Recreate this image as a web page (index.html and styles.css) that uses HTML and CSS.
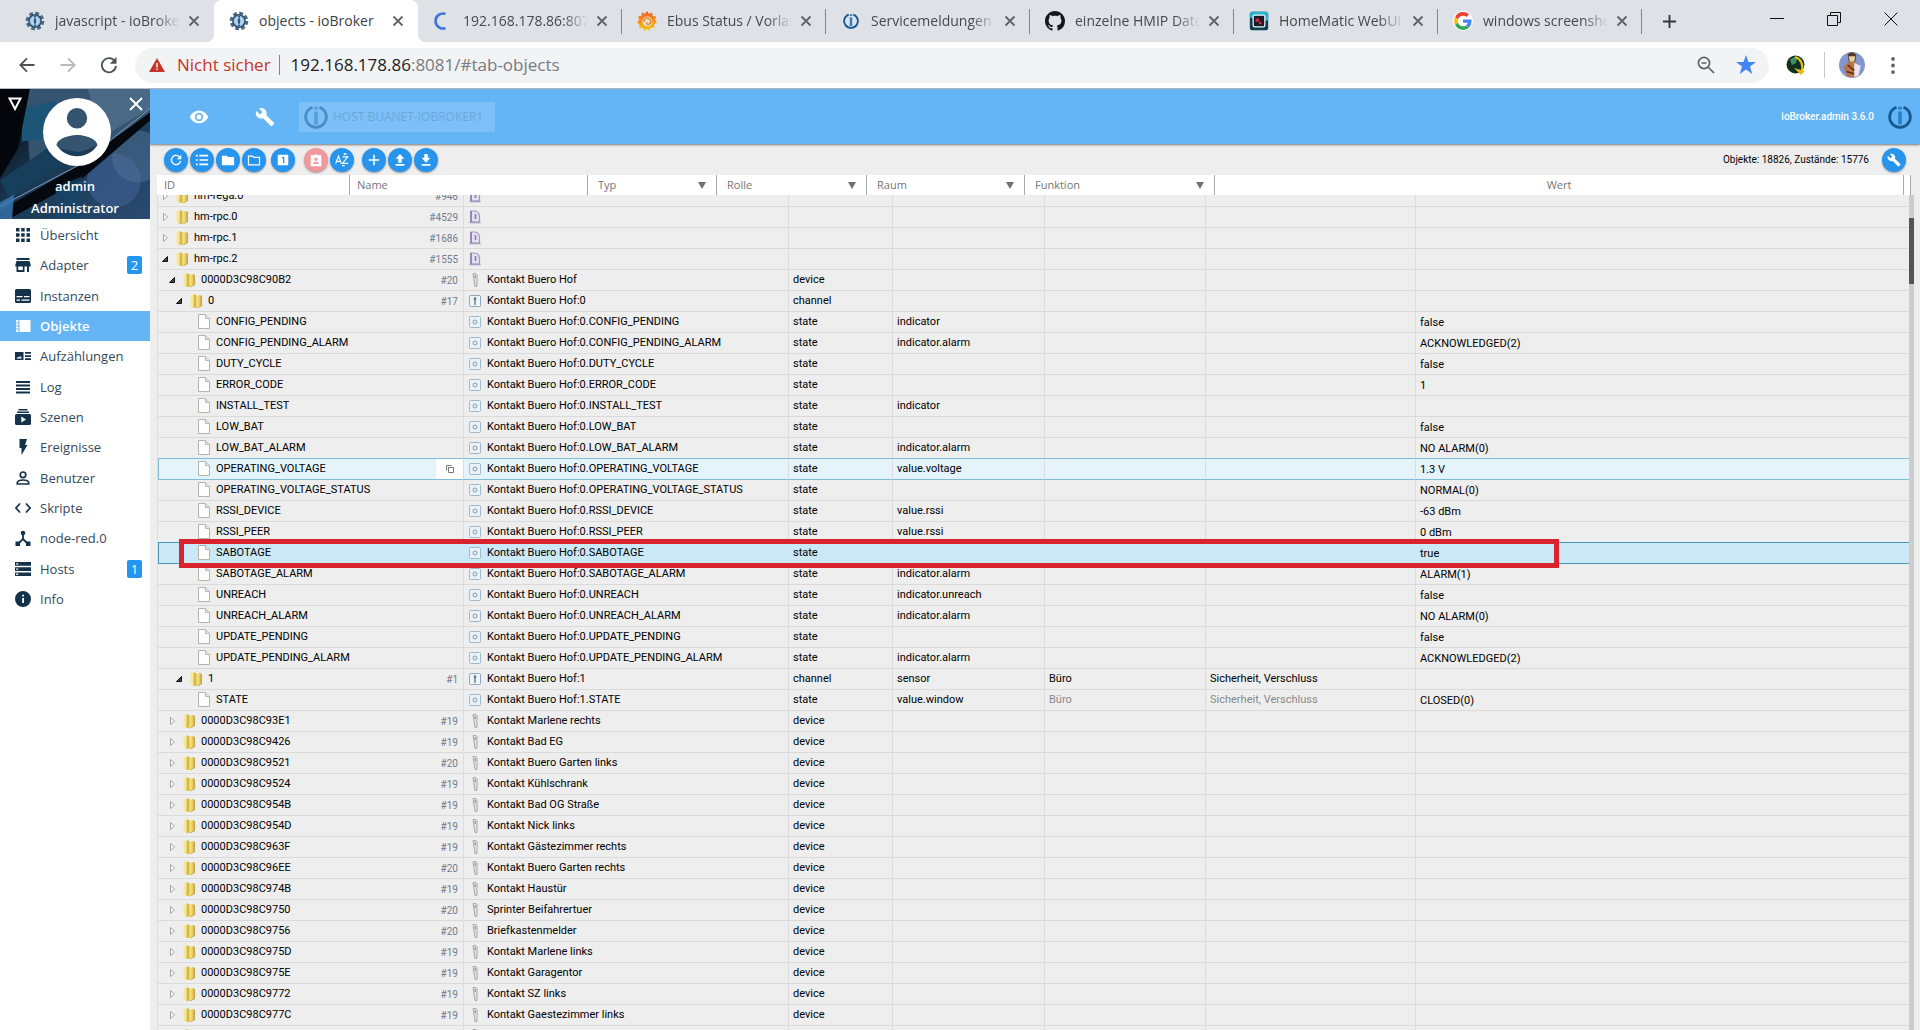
FILE: index.html
```
<!DOCTYPE html>
<html lang="de">
<head>
<meta charset="utf-8">
<title>objects - ioBroker</title>
<link rel="stylesheet" href="styles.css">
</head>
<body>
<svg class="sprite" aria-hidden="true">
  <defs>
    <linearGradient id="gold" x1="0" x2="1" y1="0" y2="0"><stop offset="0" stop-color="#f6e793"/><stop offset=".5" stop-color="#ecd268"/><stop offset="1" stop-color="#c9a63a"/></linearGradient>
    <linearGradient id="flame" x1="0" x2="0" y1="0" y2="1"><stop offset="0" stop-color="#ef5b28"/><stop offset="1" stop-color="#fbca0a"/></linearGradient>
  </defs>
  <symbol id="x" viewBox="0 0 12 12"><path d="M1.500 1.500l9 9M10.500 1.500l-9 9" fill="none" stroke="currentColor" stroke-width="1.800"/></symbol>
  <symbol id="gear" viewBox="0 0 24 24"><circle cx="12" cy="12" r="9.500" fill="none" stroke="#4d6b86" stroke-width="3.400" stroke-dasharray="4.600 2.860"/><circle cx="12" cy="12" r="7.400" fill="#9fc3e2" stroke="#294b6c" stroke-width="1.800"/><path d="M12 6v12" stroke="#1d4f80" stroke-width="2.200"/><circle cx="12" cy="12" r="4" fill="none" stroke="#e3eff8" stroke-width=".8"/></symbol>
  <symbol id="io" viewBox="0 0 24 24"><path d="M8.500 2.300a10.300 10.300 0 1 0 7 0" fill="none" stroke="#17598f" stroke-width="2.800"/><path d="M12 6.500v13M12 1.800v2.800" stroke="#2c7fc0" stroke-width="3.600"/></symbol>
  <symbol id="folder" viewBox="0 0 16 16"><path d="M2.500 2.500L6 .8l2 1.400v12.600L5.500 15 2.500 13.400z" fill="#f6e898"/><path d="M5.800 1.200l3 1.400v12l-3.300.4z" fill="#d6b846"/><path d="M8.500 3.600L12 1.800l1.700 1.300v9.700L8.600 15z" fill="url(#gold)"/><path d="M13.400 3v10l-4.500 2" fill="none" stroke="#b99733" stroke-width=".7"/></symbol>
  <symbol id="file" viewBox="0 0 16 16"><path d="M2.500.5h7l4 4v10h-11z" fill="#fdfdfb" stroke="#b4b4ae"/><path d="M9.500.5v4h4" fill="#e4e4de" stroke="#b8b8b2"/></symbol>
  <symbol id="closed" viewBox="0 0 12 12"><path d="M4.500 2.500v7l4-3.500z" fill="#fff" stroke="#9a9a9a" stroke-width=".9"/></symbol>
  <symbol id="open" viewBox="0 0 12 12"><path d="M8.500 3.500v5h-5z" fill="#444" stroke="#111"/></symbol>
  <symbol id="inst" viewBox="0 0 16 16"><path d="M4 13V2h4q4 .5 4.500 5v6z" fill="#e6e1f0" stroke="#a399bd" stroke-width="1.200"/><path d="M4 2v11M8.500 5v5" stroke="#8b7eae" stroke-width="1.600"/><path d="M2.500 13.500h11" stroke="#a79cc2" stroke-width="1.600"/></symbol>
  <symbol id="dev" viewBox="0 0 16 16"><path d="M6 1.500h3l1 1v12H8z" fill="#e2e2e2" stroke="#a8a8a8"/><path d="M8.200 3v3" stroke="#888"/></symbol>
  <symbol id="chan" viewBox="0 0 16 16"><rect x="2.500" y="2.500" width="11" height="11" rx="1" fill="#eef5f9" stroke="#8fa9ba"/><path d="M8 4v8M6.500 6h3" stroke="#476478" stroke-width="1.200"/></symbol>
  <symbol id="state" viewBox="0 0 16 16"><rect x="2.500" y="2.500" width="11" height="11" rx="1" fill="#eaf2f7" stroke="#a2b9c8"/><circle cx="8" cy="8" r="2" fill="none" stroke="#7f9db0"/></symbol>
  <symbol id="wrench" viewBox="0 0 24 24"><path fill="currentColor" d="M22.700 19l-9.100-9.100c.9-2.300.4-5-1.500-6.900-2-2-5-2.400-7.400-1.300L9 6 6 9 1.600 4.700C.4 7.100.9 10.100 2.900 12.100c1.900 1.900 4.600 2.400 6.900 1.500l9.100 9.100c.4.4 1 .4 1.400 0l2.300-2.300c.5-.4.5-1.100.1-1.400z"/></symbol>
</svg>

<header class="browser">
  <div class="tabs">
    <div class="tab"><svg class="fav"><use href="#gear"/></svg><span class="tt">javascript - ioBroker</span><button class="tc" aria-label="Tab schließen"><svg><use href="#x"/></svg></button></div>
    <div class="tab active"><svg class="fav"><use href="#gear"/></svg><span class="tt">objects - ioBroker</span><button class="tc" aria-label="Tab schließen"><svg><use href="#x"/></svg></button></div>
    <div class="tab sep"><svg class="fav" viewBox="0 0 24 24"><path d="M15 3.500a9 9 0 1 0 0 17" fill="none" stroke="#3b73dc" stroke-width="3"/></svg><span class="tt">192.168.178.86:8077</span><button class="tc" aria-label="Tab schließen"><svg><use href="#x"/></svg></button></div>
    <div class="tab sep"><svg class="fav" viewBox="0 0 24 24"><path d="M12 0l2.300 3.200 3.900-1.400.5 4.200 4.300.7-1.400 3.900 2.400 3.200-3.500 2.200.3 4-4-.2-2.100 3.600L12 21.500 8.600 24 7 20.200l-4.300.2.400-4L0 13.800l2.600-3.200-1.300-3.900 4.100-.7.500-4.200 3.900 1.400z" fill="url(#flame)"/><circle cx="12.500" cy="12.500" r="6" fill="#dee1e6"/><path d="M8.500 13a4 4 0 1 1 6 2.800c-2 1-3.500-.8-2.700-2.300" fill="none" stroke="#f38a1e" stroke-width="1.800"/></svg><span class="tt">Ebus Status / Vorlauf</span><button class="tc" aria-label="Tab schließen"><svg><use href="#x"/></svg></button></div>
    <div class="tab sep"><svg class="fav small"><use href="#io"/></svg><span class="tt">Servicemeldungen - io</span><button class="tc" aria-label="Tab schließen"><svg><use href="#x"/></svg></button></div>
    <div class="tab sep"><svg class="fav" viewBox="0 0 16 16"><path fill="#15171a" d="M8 0C3.580 0 0 3.580 0 8c0 3.540 2.290 6.530 5.470 7.590.4.070.55-.17.55-.38 0-.19-.01-.82-.01-1.490-2.010.37-2.530-.49-2.690-.94-.09-.23-.48-.94-.82-1.130-.28-.15-.68-.52-.01-.53.63-.01 1.080.58 1.230.82.72 1.210 1.870.87 2.330.66.070-.52.28-.87.51-1.070-1.780-.2-3.640-.89-3.640-3.950 0-.87.31-1.590.82-2.150-.08-.2-.36-1.020.08-2.120 0 0 .67-.21 2.200.82.64-.18 1.320-.27 2-.27s1.360.09 2 .27c1.530-1.040 2.200-.82 2.200-.82.44 1.100.16 1.920.08 2.120.51.56.82 1.270.82 2.150 0 3.070-1.870 3.750-3.650 3.950.29.25.54.73.54 1.480 0 1.070-.01 1.930-.01 2.200 0 .21.15.46.55.38A8.010 8.010 0 0 0 16 8c0-4.420-3.580-8-8-8z"/></svg><span class="tt">einzelne HMIP Datenpunkte</span><button class="tc" aria-label="Tab schließen"><svg><use href="#x"/></svg></button></div>
    <div class="tab sep"><svg class="fav" viewBox="0 0 24 24"><rect x="1" y="1" width="22" height="22" rx="3" fill="#0c3c4f"/><path d="M1 8V4a3 3 0 0 1 3-3h16a3 3 0 0 1 3 3v8z" fill="#27b3cf"/><rect x="5" y="5" width="14" height="14" rx="2" fill="#1b1a22" stroke="#eef6f8" stroke-width="1.500"/><path d="M8 9h4v4H8zM12 13h3v3h-3z" fill="#d02b50"/></svg><span class="tt">HomeMatic WebUI</span><button class="tc" aria-label="Tab schließen"><svg><use href="#x"/></svg></button></div>
    <div class="tab sep"><svg class="fav" viewBox="-3 -3 54 54"><circle cx="24" cy="24" r="27" fill="#fff"/><path fill="#ea4335" d="M24 9.500c3.540 0 6.710 1.220 9.210 3.600l6.850-6.850C35.900 2.380 30.470 0 24 0 14.620 0 6.510 5.380 2.560 13.220l7.980 6.190C12.430 13.720 17.740 9.500 24 9.500z"/><path fill="#4285f4" d="M46.980 24.550c0-1.570-.15-3.090-.38-4.550H24v9.020h12.940c-.58 2.960-2.260 5.480-4.780 7.180l7.730 6c4.510-4.180 7.090-10.360 7.090-17.650z"/><path fill="#fbbc05" d="M10.530 28.590c-.48-1.450-.76-2.990-.76-4.590s.27-3.140.76-4.590l-7.980-6.190C.92 16.460 0 20.120 0 24s.92 7.540 2.560 10.780z"/><path fill="#34a853" d="M24 48c6.480 0 11.930-2.130 15.890-5.810l-7.730-6c-2.150 1.450-4.920 2.300-8.160 2.300-6.260 0-11.570-4.220-13.470-9.910l-7.980 6.190C6.510 42.620 14.620 48 24 48z"/></svg><span class="tt">windows screenshot</span><button class="tc" aria-label="Tab schließen"><svg><use href="#x"/></svg></button></div>
    <button class="newtab" aria-label="Neuer Tab"><svg viewBox="0 0 16 16"><path d="M8 1v14M1 8h14" stroke="#33363a" stroke-width="2"/></svg></button>
    <div class="win">
      <button aria-label="Minimieren"><svg viewBox="0 0 14 14"><path d="M0 6.500h14" stroke="#111"/></svg></button>
      <button aria-label="Verkleinern"><svg viewBox="0 0 14 14"><path d="M.5 3.500h10v10H.500zM3.500 3.500v-3h10v10h-3" fill="none" stroke="#111"/></svg></button>
      <button aria-label="Schließen"><svg viewBox="0 0 14 14"><path d="M.5.5l13 13M13.500.5l-13 13" stroke="#111"/></svg></button>
    </div>
  </div>
  <div class="nav">
    <button class="nb" aria-label="Zurück"><svg viewBox="0 0 24 24"><path d="M21 12H4M12 4l-8 8 8 8" fill="none" stroke="#4d5156" stroke-width="2.200"/></svg></button>
    <button class="nb" aria-label="Vorwärts"><svg viewBox="0 0 24 24"><path d="M3 12h17M12 4l8 8-8 8" fill="none" stroke="#b8babd" stroke-width="2.200"/></svg></button>
    <button class="nb" aria-label="Neu laden"><svg viewBox="0 0 24 24"><path d="M19 7.500A8.500 8.500 0 1 0 20.400 13" fill="none" stroke="#4d5156" stroke-width="2.200"/><path d="M21 2.500v8h-8z" fill="#4d5156"/></svg></button>
    <div class="omni">
      <svg class="warn" viewBox="0 0 16 14"><path d="M8 0l8 14H0z" fill="#c5352b"/><path d="M8 5v4.500M8 10.500v1.600" stroke="#fff" stroke-width="1.400"/></svg>
      <span class="unsafe">Nicht sicher</span>
      <span class="url"><b>192.168.178.86</b>:8081/#tab-objects</span>
      <button class="ob" aria-label="Zoom"><svg viewBox="0 0 18 18"><circle cx="7" cy="7" r="5.600" fill="none" stroke="#5f6368" stroke-width="1.700"/><path d="M4.500 7h5M11 11l6 6" stroke="#5f6368" stroke-width="1.700"/></svg></button>
      <button class="ob" aria-label="Lesezeichen"><svg viewBox="0 0 20 20"><path d="M10 0l2.500 7H20l-6 4.500 2.300 7.500L10 14.500 3.700 19 6 11.500 0 7h7.500z" fill="#4285f4"/></svg></button>
    </div>
    <div class="ext">
      <svg class="globe" viewBox="0 0 20 20"><circle cx="9.500" cy="9.500" r="9" fill="#12301c"/><path d="M4 5q3-4 7-2l-1 5-4 2z" fill="#3f8f66"/><path d="M9 2q9 3 7 15" fill="none" stroke="#e2c21f" stroke-width="2.200"/><path d="M8 13l11 3-4 4z" fill="#e8b81a"/></svg>
      <svg class="avatar" viewBox="0 0 24 24"><circle cx="12" cy="12" r="12" fill="#8097cf"/><path d="M8 2q5-4 8 1l-1 6H9z" fill="#5b3a22"/><path d="M9 4h6l-1 5h-4z" fill="#e6d3a2"/><path d="M4 14l5-5h6l4 5-3 9H8z" fill="#b67545"/><path d="M14 10l6 3-2 9-4 1z" fill="#eee3ea"/><path d="M8 12l6 5M7 18l7 2" stroke="#5a2d1b" stroke-width="1.500"/></svg>
      <button class="menu" aria-label="Menü"><svg viewBox="0 0 4 18"><circle cx="2" cy="2" r="2"/><circle cx="2" cy="9" r="2"/><circle cx="2" cy="16" r="2"/></svg></button>
    </div>
  </div>
</header>

<div class="app">
  <aside class="side">
    <div class="user">
      <svg class="photo" viewBox="0 0 150 131" preserveAspectRatio="xMidYMid slice" aria-hidden="true">
        <defs><linearGradient id="ph" x1="0" y1="0" x2="1" y2="1"><stop offset="0" stop-color="#05080e"/><stop offset=".5" stop-color="#1b3a55"/><stop offset="1" stop-color="#2c4b72"/></linearGradient></defs>
        <rect width="150" height="131" fill="url(#ph)"/>
        <path d="M25 0h125v30L90 60 30 80z" fill="#35546f"/>
        <path d="M88 0h62v20l-50 30z" fill="#5d7da0" opacity=".5"/>
        <path d="M22 20l34-8 6 36-40 5z" fill="#1d5577"/>
        <path d="M0 0h30L18 60 0 90z" fill="#03060b"/>
        <path d="M0 92l50-34 30 6-70 46z" fill="#173f5b"/>
        <circle cx="114" cy="92" r="27" fill="#3a5a8a" opacity=".8"/>
        <circle cx="138" cy="68" r="26" fill="#4f7397" opacity=".5"/>
        <path d="M0 122L70 82 150 24v8L80 92 8 131H0z" fill="#05080f"/>
        <path d="M0 118L80 76 150 20" fill="none" stroke="#7f9bb8" stroke-width="1"/>
        <path d="M56 98l26-10v43H54z" fill="#16466a" opacity=".7"/>
        <path d="M0 114l14-8-2 25H0z" fill="#3a7cb8" opacity=".8"/>
      </svg>
      <button class="ucorner" aria-label="Menü"><svg viewBox="0 0 14 14"><path d="M1.500 1.500h11L7 12z" fill="none" stroke="#fff" stroke-width="2"/></svg></button>
      <button class="ucorner uclose" aria-label="Schließen"><svg viewBox="0 0 14 14"><path d="M1 1l12 12M13 1L1 13" stroke="#fff" stroke-width="1.800"/></svg></button>
      <svg class="face" viewBox="0 0 68 68"><path fill="#fff" fill-rule="evenodd" d="M34 0a34 34 0 1 0 0 68 34 34 0 0 0 0-68zm0 10a10.200 10.200 0 1 1 0 20.400A10.200 10.200 0 0 1 34 10zm0 48.300c-8.500 0-16-4.400-20.400-11C13.700 40.500 27.200 37 34 37s20.300 3.500 20.400 10.300c-4.400 6.600-11.900 11-20.400 11z"/></svg>
      <span>admin</span>
      <span>Administrator</span>
    </div>
    <nav class="menu-list">
      <a href="#tab-intro"><svg viewBox="0 0 16 16"><path d="M1 1h3.500v3.500H1zM6.200 1h3.500v3.500H6.200zM11.500 1H15v3.500h-3.500zM1 6.200h3.500v3.500H1zM6.200 6.200h3.500v3.500H6.200zM11.500 6.200H15v3.500h-3.500zM1 11.500h3.500V15H1zM6.200 11.500h3.500V15H6.200zM11.500 11.500H15V15h-3.500z"/></svg>Übersicht</a>
      <a href="#tab-adapters"><svg viewBox="0 0 16 16"><path fill-rule="evenodd" d="M1.500 1h13v2h-13zM1.500 4h13l1.200 4v1.500H14V15h-2V9.500H9.500V15H1.500V9.500H.3V8zM3.200 9.500V13h4.600V9.500z"/></svg>Adapter<i>2</i></a>
      <a href="#tab-instances"><svg viewBox="0 0 16 16"><path fill-rule="evenodd" d="M1.500 1h13a1.500 1.500 0 0 1 1.500 1.500v11a1.500 1.500 0 0 1-1.500 1.500h-13A1.500 1.500 0 0 1 0 13.500v-11A1.500 1.500 0 0 1 1.500 1zM1.500 8v1.300h6V8zM9 8v1.300h5.500V8zM1.500 11.500v1.300h3.500v-1.300zM6.500 11.500v1.300h8v-1.300z"/></svg>Instanzen</a>
      <a href="#tab-objects" class="on"><svg viewBox="0 0 16 16"><path d="M1 2h2.500v2.500H1zM1 5.500h2.500v2H1zM1 8.500h2.500v2H1zM1 11.500h2.500V14H1zM4.500 2H15.500v12H4.500z"/></svg>Objekte</a>
      <a href="#tab-enums"><svg viewBox="0 0 16 16"><path fill-rule="evenodd" d="M0 4h8.500v8H0zM1.500 10.500h5.500L5.200 8 4 9.500 3 8.700zM10 4h6v1.800h-6zM10 7.200h6V9h-6zM10 10.300h6v1.700h-6z"/></svg>Aufzählungen</a>
      <a href="#tab-logs"><svg viewBox="0 0 16 16"><path d="M1 2h14v2H1zM1 5.500h14v2H1zM1 9h14v2H1zM1 12.500h14v2H1z"/></svg>Log</a>
      <a href="#tab-scenes"><svg viewBox="0 0 16 16"><path fill-rule="evenodd" d="M3.500 0h9v1.500h-9zM2 2.500h12V4H2zM1.500 5h13A1.500 1.500 0 0 1 16 6.500v8a1.500 1.500 0 0 1-1.500 1.500h-13A1.500 1.500 0 0 1 0 14.500v-8A1.500 1.500 0 0 1 1.500 5zM6.300 7.500v6l4.700-3z"/></svg>Szenen</a>
      <a href="#tab-events"><svg viewBox="0 0 16 16"><path d="M4.500 0h7.500l-2 6h2.500L6.500 16V9h-2z"/></svg>Ereignisse</a>
      <a href="#tab-users"><svg viewBox="0 0 16 16"><circle cx="8" cy="4.800" r="2.800" fill="none" stroke="#14324a" stroke-width="1.700"/><path d="M2.300 14v-1.500Q3 10 8 10t5.700 2.500V14z" fill="none" stroke="#14324a" stroke-width="1.700"/></svg>Benutzer</a>
      <a href="#tab-javascript"><svg viewBox="0 0 16 16"><path d="M5 3.500L1 8l4 4.500M11 3.500L15 8l-4 4.500" fill="none" stroke="#14324a" stroke-width="1.700"/></svg>Skripte</a>
      <a href="#tab-node-red"><svg viewBox="0 0 16 16"><circle cx="8" cy="3" r="2.300"/><path d="M8 4v5L3 14M8 9l5 5" fill="none" stroke="#14324a" stroke-width="1.800"/><path d="M.5 11.500H5V16H.500zM11 11.500h4.500V16H11z"/></svg>node-red.0</a>
      <a href="#tab-hosts"><svg viewBox="0 0 16 16"><path fill-rule="evenodd" d="M0 1h16v3.700H0zM1.200 2.200v1.300h2V2.200zM0 6.200h16v3.700H0zM1.200 7.400v1.300h2V7.400zM0 11.400h16v3.700H0zM1.200 12.600v1.300h2v-1.300z"/></svg>Hosts<i>1</i></a>
      <a href="#tab-info"><svg viewBox="0 0 16 16"><path fill-rule="evenodd" d="M8 0a8 8 0 1 0 0 16A8 8 0 0 0 8 0zM7.200 3.800h1.800v1.700H7.200zM7.200 7h1.800v5H7.200z"/></svg>Info</a>
    </nav>
  </aside>

  <main class="main">
    <div class="appbar">
      <button class="ab" aria-label="Ansicht"><svg viewBox="0 0 24 24"><path fill="#fff" fill-rule="evenodd" d="M12 4.500C7 4.500 2.700 7.600 1 12c1.700 4.400 6 7.500 11 7.500s9.300-3.100 11-7.500c-1.700-4.400-6-7.500-11-7.500zM12 17a5 5 0 1 1 0-10 5 5 0 0 1 0 10zm0-8a3 3 0 1 0 0 6 3 3 0 0 0 0-6z"/></svg></button>
      <button class="ab" aria-label="Einstellungen"><svg><use href="#wrench"/></svg></button>
      <button class="host" disabled><svg><use href="#io"/></svg>HOST BUANET-IOBROKER1</button>
      <span class="ver">ioBroker.admin 3.6.0</span>
      <svg class="logo"><use href="#io"/></svg>
    </div>
    <div class="tools">
      <button class="rb" aria-label="Aktualisieren"><svg viewBox="0 0 16 16"><path d="M12.500 5A5.300 5.300 0 1 0 13.300 9" fill="none" stroke="#fff" stroke-width="1.600"/><path d="M14 2v5H9z" fill="#fff"/></svg></button>
      <button class="rb" aria-label="Liste"><svg viewBox="0 0 16 16"><path d="M1 3h2M5 3h10M1 8h2M5 8h10M1 13h2M5 13h10" stroke="#fff" stroke-width="1.800"/></svg></button>
      <button class="rb" aria-label="Zuklappen"><svg viewBox="0 0 16 16"><path d="M1 3h5.500L8 4.500h7V14H1z" fill="#fff"/></svg></button>
      <button class="rb" aria-label="Aufklappen"><svg viewBox="0 0 16 16"><path d="M1.700 3.500h4.500L7.800 5h6.500v8.500H1.700z" fill="none" stroke="#fff" stroke-width="1.400"/></svg></button>
      <button class="rb g1" aria-label="Eine Ebene"><svg viewBox="0 0 16 16"><path fill="#fff" fill-rule="evenodd" d="M2 2h12v12H2zM6.500 4.500V6H8v5.500h1.500v-7z"/></svg></button>
      <button class="rb red g2" aria-label="Expertenmodus"><svg viewBox="0 0 16 16"><path fill="#fff" fill-rule="evenodd" d="M2 2.500h4L8 1l2 1.500h4V15H2zM8 5a2 2 0 1 0 0 4 2 2 0 0 0 0-4zM4.500 12.500h7Q11 10 8 10t-3.500 2.500z"/></svg></button>
      <button class="rb" aria-label="Sortieren"><svg viewBox="0 0 16 16"><path d="M.8 12L4 3.500 7.200 12M2 9.500h4M8.500 4.500h6l-6 7.300h6.500M10 2l1.500-1.500L13 2M8 14.500h3" fill="none" stroke="#fff" stroke-width="1.300"/></svg></button>
      <button class="rb g3" aria-label="Hinzufügen"><svg viewBox="0 0 16 16"><path d="M8 2v12M2 8h12" stroke="#fff" stroke-width="1.800"/></svg></button>
      <button class="rb" aria-label="Hochladen"><svg viewBox="0 0 16 16"><path d="M8 1l5 5.500h-3V11H6V6.500H3zM3 12.500h10v2H3z" fill="#fff"/></svg></button>
      <button class="rb" aria-label="Herunterladen"><svg viewBox="0 0 16 16"><path d="M8 11L3 5.500h3V1h4v4.500h3zM3 12.500h10v2H3z" fill="#fff"/></svg></button>
      <span class="stat">Objekte: 18826, Zustände: 15776</span>
      <button class="rb" aria-label="Spalten"><svg><use href="#wrench"/></svg></button>
    </div>

    <form class="filters">
      <input class="f-id" placeholder="ID" aria-label="ID">
      <input class="f-name" placeholder="Name" aria-label="Name">
      <label class="f-typ"><select aria-label="Typ"><option>Typ</option></select></label>
      <label class="f-role"><select aria-label="Rolle"><option>Rolle</option></select></label>
      <label class="f-room"><select aria-label="Raum"><option>Raum</option></select></label>
      <label class="f-func"><select aria-label="Funktion"><option>Funktion</option></select></label>
      <span class="f-val">Wert</span>
      <span class="f-end"></span>
    </form>

    <div class="scroll">
      <div class="view">
      <table class="tree">
        <colgroup><col class="c1"><col class="c2"><col class="c3"><col class="c4"><col class="c5"><col class="c6"><col></colgroup>
        <tbody>
        <tr><td><div class="n l0"><svg class="e"><use href="#closed"/></svg><svg><use href="#folder"/></svg>hm-rega.0<small>#946</small></div></td><td><div class="n"><svg><use href="#inst"/></svg></div></td><td></td><td></td><td></td><td></td><td></td></tr>
        <tr><td><div class="n l0"><svg class="e"><use href="#closed"/></svg><svg><use href="#folder"/></svg>hm-rpc.0<small>#4529</small></div></td><td><div class="n"><svg><use href="#inst"/></svg></div></td><td></td><td></td><td></td><td></td><td></td></tr>
        <tr><td><div class="n l0"><svg class="e"><use href="#closed"/></svg><svg><use href="#folder"/></svg>hm-rpc.1<small>#1686</small></div></td><td><div class="n"><svg><use href="#inst"/></svg></div></td><td></td><td></td><td></td><td></td><td></td></tr>
        <tr><td><div class="n l0"><svg class="e"><use href="#open"/></svg><svg><use href="#folder"/></svg>hm-rpc.2<small>#1555</small></div></td><td><div class="n"><svg><use href="#inst"/></svg></div></td><td></td><td></td><td></td><td></td><td></td></tr>
        <tr><td><div class="n l1"><svg class="e"><use href="#open"/></svg><svg><use href="#folder"/></svg>0000D3C98C90B2<small>#20</small></div></td><td><div class="n"><svg><use href="#dev"/></svg>Kontakt Buero Hof</div></td><td>device</td><td></td><td></td><td></td><td></td></tr>
        <tr><td><div class="n l2"><svg class="e"><use href="#open"/></svg><svg><use href="#folder"/></svg>0<small>#17</small></div></td><td><div class="n"><svg><use href="#chan"/></svg>Kontakt Buero Hof:0</div></td><td>channel</td><td></td><td></td><td></td><td></td></tr>
        <tr><td><div class="n l3"><svg><use href="#file"/></svg>CONFIG_PENDING</div></td><td><div class="n"><svg><use href="#state"/></svg>Kontakt Buero Hof:0.CONFIG_PENDING</div></td><td>state</td><td>indicator</td><td></td><td></td><td>false</td></tr>
        <tr><td><div class="n l3"><svg><use href="#file"/></svg>CONFIG_PENDING_ALARM</div></td><td><div class="n"><svg><use href="#state"/></svg>Kontakt Buero Hof:0.CONFIG_PENDING_ALARM</div></td><td>state</td><td>indicator.alarm</td><td></td><td></td><td>ACKNOWLEDGED(2)</td></tr>
        <tr><td><div class="n l3"><svg><use href="#file"/></svg>DUTY_CYCLE</div></td><td><div class="n"><svg><use href="#state"/></svg>Kontakt Buero Hof:0.DUTY_CYCLE</div></td><td>state</td><td></td><td></td><td></td><td>false</td></tr>
        <tr><td><div class="n l3"><svg><use href="#file"/></svg>ERROR_CODE</div></td><td><div class="n"><svg><use href="#state"/></svg>Kontakt Buero Hof:0.ERROR_CODE</div></td><td>state</td><td></td><td></td><td></td><td>1</td></tr>
        <tr><td><div class="n l3"><svg><use href="#file"/></svg>INSTALL_TEST</div></td><td><div class="n"><svg><use href="#state"/></svg>Kontakt Buero Hof:0.INSTALL_TEST</div></td><td>state</td><td>indicator</td><td></td><td></td><td></td></tr>
        <tr><td><div class="n l3"><svg><use href="#file"/></svg>LOW_BAT</div></td><td><div class="n"><svg><use href="#state"/></svg>Kontakt Buero Hof:0.LOW_BAT</div></td><td>state</td><td></td><td></td><td></td><td>false</td></tr>
        <tr><td><div class="n l3"><svg><use href="#file"/></svg>LOW_BAT_ALARM</div></td><td><div class="n"><svg><use href="#state"/></svg>Kontakt Buero Hof:0.LOW_BAT_ALARM</div></td><td>state</td><td>indicator.alarm</td><td></td><td></td><td>NO ALARM(0)</td></tr>
        <tr class="hover"><td><div class="n l3"><svg><use href="#file"/></svg>OPERATING_VOLTAGE<button type="button" class="copy" aria-label="Kopieren"><svg viewBox="0 0 10 10"><path d="M3.500 3.500h5v5h-5zM1.500 6.500v-5h5" fill="none" stroke="#777"/></svg></button></div></td><td><div class="n"><svg><use href="#state"/></svg>Kontakt Buero Hof:0.OPERATING_VOLTAGE</div></td><td>state</td><td>value.voltage</td><td></td><td></td><td>1.3 V</td></tr>
        <tr><td><div class="n l3"><svg><use href="#file"/></svg>OPERATING_VOLTAGE_STATUS</div></td><td><div class="n"><svg><use href="#state"/></svg>Kontakt Buero Hof:0.OPERATING_VOLTAGE_STATUS</div></td><td>state</td><td></td><td></td><td></td><td>NORMAL(0)</td></tr>
        <tr><td><div class="n l3"><svg><use href="#file"/></svg>RSSI_DEVICE</div></td><td><div class="n"><svg><use href="#state"/></svg>Kontakt Buero Hof:0.RSSI_DEVICE</div></td><td>state</td><td>value.rssi</td><td></td><td></td><td>-63 dBm</td></tr>
        <tr><td><div class="n l3"><svg><use href="#file"/></svg>RSSI_PEER</div></td><td><div class="n"><svg><use href="#state"/></svg>Kontakt Buero Hof:0.RSSI_PEER</div></td><td>state</td><td>value.rssi</td><td></td><td></td><td>0 dBm</td></tr>
        <tr class="active"><td><div class="n l3"><svg><use href="#file"/></svg>SABOTAGE</div></td><td><div class="n"><svg><use href="#state"/></svg>Kontakt Buero Hof:0.SABOTAGE</div></td><td>state</td><td></td><td></td><td></td><td>true</td></tr>
        <tr><td><div class="n l3"><svg><use href="#file"/></svg>SABOTAGE_ALARM</div></td><td><div class="n"><svg><use href="#state"/></svg>Kontakt Buero Hof:0.SABOTAGE_ALARM</div></td><td>state</td><td>indicator.alarm</td><td></td><td></td><td>ALARM(1)</td></tr>
        <tr><td><div class="n l3"><svg><use href="#file"/></svg>UNREACH</div></td><td><div class="n"><svg><use href="#state"/></svg>Kontakt Buero Hof:0.UNREACH</div></td><td>state</td><td>indicator.unreach</td><td></td><td></td><td>false</td></tr>
        <tr><td><div class="n l3"><svg><use href="#file"/></svg>UNREACH_ALARM</div></td><td><div class="n"><svg><use href="#state"/></svg>Kontakt Buero Hof:0.UNREACH_ALARM</div></td><td>state</td><td>indicator.alarm</td><td></td><td></td><td>NO ALARM(0)</td></tr>
        <tr><td><div class="n l3"><svg><use href="#file"/></svg>UPDATE_PENDING</div></td><td><div class="n"><svg><use href="#state"/></svg>Kontakt Buero Hof:0.UPDATE_PENDING</div></td><td>state</td><td></td><td></td><td></td><td>false</td></tr>
        <tr><td><div class="n l3"><svg><use href="#file"/></svg>UPDATE_PENDING_ALARM</div></td><td><div class="n"><svg><use href="#state"/></svg>Kontakt Buero Hof:0.UPDATE_PENDING_ALARM</div></td><td>state</td><td>indicator.alarm</td><td></td><td></td><td>ACKNOWLEDGED(2)</td></tr>
        <tr><td><div class="n l2"><svg class="e"><use href="#open"/></svg><svg><use href="#folder"/></svg>1<small>#1</small></div></td><td><div class="n"><svg><use href="#chan"/></svg>Kontakt Buero Hof:1</div></td><td>channel</td><td>sensor</td><td>Büro</td><td>Sicherheit, Verschluss</td><td></td></tr>
        <tr><td><div class="n l3"><svg><use href="#file"/></svg>STATE</div></td><td><div class="n"><svg><use href="#state"/></svg>Kontakt Buero Hof:1.STATE</div></td><td>state</td><td>value.window</td><td class="dim">Büro</td><td class="dim">Sicherheit, Verschluss</td><td>CLOSED(0)</td></tr>
        <tr><td><div class="n l1"><svg class="e"><use href="#closed"/></svg><svg><use href="#folder"/></svg>0000D3C98C93E1<small>#19</small></div></td><td><div class="n"><svg><use href="#dev"/></svg>Kontakt Marlene rechts</div></td><td>device</td><td></td><td></td><td></td><td></td></tr>
        <tr><td><div class="n l1"><svg class="e"><use href="#closed"/></svg><svg><use href="#folder"/></svg>0000D3C98C9426<small>#19</small></div></td><td><div class="n"><svg><use href="#dev"/></svg>Kontakt Bad EG</div></td><td>device</td><td></td><td></td><td></td><td></td></tr>
        <tr><td><div class="n l1"><svg class="e"><use href="#closed"/></svg><svg><use href="#folder"/></svg>0000D3C98C9521<small>#20</small></div></td><td><div class="n"><svg><use href="#dev"/></svg>Kontakt Buero Garten links</div></td><td>device</td><td></td><td></td><td></td><td></td></tr>
        <tr><td><div class="n l1"><svg class="e"><use href="#closed"/></svg><svg><use href="#folder"/></svg>0000D3C98C9524<small>#19</small></div></td><td><div class="n"><svg><use href="#dev"/></svg>Kontakt Kühlschrank</div></td><td>device</td><td></td><td></td><td></td><td></td></tr>
        <tr><td><div class="n l1"><svg class="e"><use href="#closed"/></svg><svg><use href="#folder"/></svg>0000D3C98C954B<small>#19</small></div></td><td><div class="n"><svg><use href="#dev"/></svg>Kontakt Bad OG Straße</div></td><td>device</td><td></td><td></td><td></td><td></td></tr>
        <tr><td><div class="n l1"><svg class="e"><use href="#closed"/></svg><svg><use href="#folder"/></svg>0000D3C98C954D<small>#19</small></div></td><td><div class="n"><svg><use href="#dev"/></svg>Kontakt Nick links</div></td><td>device</td><td></td><td></td><td></td><td></td></tr>
        <tr><td><div class="n l1"><svg class="e"><use href="#closed"/></svg><svg><use href="#folder"/></svg>0000D3C98C963F<small>#19</small></div></td><td><div class="n"><svg><use href="#dev"/></svg>Kontakt Gästezimmer rechts</div></td><td>device</td><td></td><td></td><td></td><td></td></tr>
        <tr><td><div class="n l1"><svg class="e"><use href="#closed"/></svg><svg><use href="#folder"/></svg>0000D3C98C96EE<small>#20</small></div></td><td><div class="n"><svg><use href="#dev"/></svg>Kontakt Buero Garten rechts</div></td><td>device</td><td></td><td></td><td></td><td></td></tr>
        <tr><td><div class="n l1"><svg class="e"><use href="#closed"/></svg><svg><use href="#folder"/></svg>0000D3C98C974B<small>#19</small></div></td><td><div class="n"><svg><use href="#dev"/></svg>Kontakt Haustür</div></td><td>device</td><td></td><td></td><td></td><td></td></tr>
        <tr><td><div class="n l1"><svg class="e"><use href="#closed"/></svg><svg><use href="#folder"/></svg>0000D3C98C9750<small>#20</small></div></td><td><div class="n"><svg><use href="#dev"/></svg>Sprinter Beifahrertuer</div></td><td>device</td><td></td><td></td><td></td><td></td></tr>
        <tr><td><div class="n l1"><svg class="e"><use href="#closed"/></svg><svg><use href="#folder"/></svg>0000D3C98C9756<small>#20</small></div></td><td><div class="n"><svg><use href="#dev"/></svg>Briefkastenmelder</div></td><td>device</td><td></td><td></td><td></td><td></td></tr>
        <tr><td><div class="n l1"><svg class="e"><use href="#closed"/></svg><svg><use href="#folder"/></svg>0000D3C98C975D<small>#19</small></div></td><td><div class="n"><svg><use href="#dev"/></svg>Kontakt Marlene links</div></td><td>device</td><td></td><td></td><td></td><td></td></tr>
        <tr><td><div class="n l1"><svg class="e"><use href="#closed"/></svg><svg><use href="#folder"/></svg>0000D3C98C975E<small>#19</small></div></td><td><div class="n"><svg><use href="#dev"/></svg>Kontakt Garagentor</div></td><td>device</td><td></td><td></td><td></td><td></td></tr>
        <tr><td><div class="n l1"><svg class="e"><use href="#closed"/></svg><svg><use href="#folder"/></svg>0000D3C98C9772<small>#19</small></div></td><td><div class="n"><svg><use href="#dev"/></svg>Kontakt SZ links</div></td><td>device</td><td></td><td></td><td></td><td></td></tr>
        <tr><td><div class="n l1"><svg class="e"><use href="#closed"/></svg><svg><use href="#folder"/></svg>0000D3C98C977C<small>#19</small></div></td><td><div class="n"><svg><use href="#dev"/></svg>Kontakt Gaestezimmer links</div></td><td>device</td><td></td><td></td><td></td><td></td></tr>
        <tr><td><div class="n l1"><svg class="e"><use href="#closed"/></svg><svg><use href="#folder"/></svg></div></td><td><div class="n"><svg><use href="#dev"/></svg></div></td><td></td><td></td><td></td><td></td><td></td></tr>
        </tbody>
      </table>
      <div class="mark"></div>
      </div>
      <div class="track"><div class="thumb"></div></div>
    </div>
  </main>
</div>
</body>
</html>
```
FILE: styles.css
```
* { box-sizing: border-box; }
html, body { height: 100%; }
body {
  margin: 0;
  display: flex;
  flex-direction: column;
  overflow: hidden;
  background: #eee;
  color: #000;
  font: 11px/20px "Open Sans", "Noto Sans", sans-serif;
}
button, input, select { font: inherit; color: inherit; background: none; border: 0; padding: 0; margin: 0; }
button { display: inline-flex; align-items: center; justify-content: center; flex: none; }
svg { flex: none; display: block; }
.sprite { position: absolute; width: 0; height: 0; }

/* browser window */
.browser { flex: none; border-bottom: 1px solid #b4bac0; }
.tabs { display: flex; height: 42px; padding-left: 10px; background: #dee1e6; }
.tab { position: relative; display: flex; align-items: center; flex: 0 1 204px; min-width: 0; padding: 0 13px 0 15px; color: #45494d; font-size: 14px; }
.tab.active { background: #fff; border-radius: 8px 8px 0 0; color: #3c4043; }
.tab.active::before, .tab.active::after { content: ""; position: absolute; bottom: 0; width: 8px; height: 8px; }
.tab.active::before { left: -8px; background: radial-gradient(circle at 0 0, transparent 8px, #fff 8px); }
.tab.active::after { right: -8px; background: radial-gradient(circle at 100% 0, transparent 8px, #fff 8px); }
.tab.sep::after { content: ""; position: absolute; right: 0; top: 9px; height: 25px; width: 1px; background: #80868b; }
.fav { width: 20px; height: 20px; margin-right: 10px; }
.fav.small { width: 16px; height: 16px; margin: 0 12px 0 2px; }
.tt { flex: 1; min-width: 0; overflow: hidden; white-space: nowrap; -webkit-mask-image: linear-gradient(90deg, #000 80%, transparent); mask-image: linear-gradient(90deg, #000 80%, transparent); }
.tab.active .tt { -webkit-mask-image: none; mask-image: none; }
.tc { width: 14px; height: 20px; margin-left: 7px; color: #5f6368; }
.tc svg { width: 12px; height: 12px; }
.newtab { width: 54px; }
.newtab svg { width: 15px; height: 15px; }
.win { display: flex; margin-left: auto; padding-right: 1px; }
.win button { width: 57px; height: 38px; }
.win svg { width: 14px; height: 14px; }

.nav { display: flex; align-items: center; height: 46px; padding: 0 17px 0 6px; background: #fff; }
.nb { width: 41px; height: 30px; }
.nb svg { width: 20px; height: 20px; }
.omni { flex: 1; display: flex; align-items: center; height: 35px; margin-left: 6px; padding: 0 9px 0 14px; border-radius: 18px; background: #f1f3f4; font-size: 17px; }
.warn { width: 16px; height: 14px; margin-right: 12px; }
.unsafe { color: #c5352b; padding-right: 8px; border-right: 1px solid #80868b; margin-right: 11px; }
.url { flex: 1; color: #777b80; }
.url b { font-weight: normal; color: #202124; }
.ob { width: 40px; height: 30px; }
.ob:last-child { width: 28px; margin-left: 6px; }
.ob svg { width: 18px; height: 18px; }
.ob:last-child svg { width: 20px; height: 20px; }
.ext { display: flex; align-items: center; padding-left: 17px; }
.globe { width: 20px; height: 20px; }
.ext .avatar { box-sizing: content-box; width: 26px; height: 26px; margin: 0 18px; padding-left: 14px; border-left: 1px solid #c6c8cb; }
.menu { width: 20px; height: 24px; }
.menu svg { width: 4px; height: 17px; fill: #5f6368; }

/* side panel */
.app { flex: 1; display: flex; min-height: 0; }
.side { flex: 0 0 150px; background: #fff; }
.user { position: relative; display: flex; flex-direction: column; align-items: center; height: 130px; padding-top: 9px; overflow: hidden; background: #12202e; color: #fff; font-size: 13px; line-height: 22px; }
.photo { position: absolute; inset: 0; width: 100%; height: 100%; }
.face { position: relative; width: 68px; height: 68px; margin: 0 0 9px 3px; }
.user span { position: relative; font-weight: 600; }
.ucorner { position: absolute; left: 8px; top: 8px; }
.ucorner svg { width: 14px; height: 14px; }
.uclose { left: auto; right: 7px; }
.menu-list { display: flex; flex-direction: column; height: 394px; margin-top: 1px; }
.menu-list a { flex: 1; display: flex; align-items: center; padding: 0 8px 0 15px; color: #34495c; font-size: 13px; text-decoration: none; }
.menu-list svg { width: 16px; height: 16px; margin-right: 9px; fill: #14324a; }
.menu-list .on { background: #64b5f6; color: #fff; font-weight: 600; }
.menu-list .on svg { fill: #fff; }
.menu-list i { margin-left: auto; width: 15px; height: 18px; border-radius: 2px; background: #2196f3; color: #fff; font-style: normal; line-height: 18px; text-align: center; }

/* app bar and tools */
.main { flex: 1; min-width: 0; display: flex; flex-direction: column; }
.appbar { flex: none; display: flex; align-items: center; height: 55px; padding: 0 8px 0 36px; background: #64b5f6; box-shadow: 0 1px 2px rgba(0, 0, 0, .5); }
.ab { width: 26px; height: 26px; margin-right: 40px; color: #fff; }
.ab + .ab { margin-right: 21px; }
.ab svg { width: 20px; height: 20px; }
.host { height: 30px; padding: 0 12px 0 5px; background: #7dc0f8; color: #6aa7dc; font-size: 12px; }
.host svg { width: 24px; height: 24px; margin-right: 5px; opacity: .5; }
.ver { margin-left: auto; margin-right: 14px; color: #fff; font-family: Roboto, sans-serif; font-weight: 500; font-size: 10px; }
.logo { width: 24px; height: 24px; }
.tools { flex: none; display: flex; align-items: center; gap: 2px; height: 31px; padding: 1px 14px; }
.rb { width: 24px; height: 24px; border-radius: 50%; background: #2795ee; box-shadow: 0 1px 2px rgba(0, 0, 0, .35); color: #fff; }
.rb svg { width: 14px; height: 14px; }
.rb.red { background: #ee9a9c; }
.g1 { margin-left: 3px; }
.g2 { margin-left: 7px; }
.g3 { margin-left: 6px; }
.stat { margin-left: auto; margin-right: 11px; font-family: Roboto, sans-serif; font-size: 10px; }

/* column filters */
.filters { flex: none; display: flex; height: 20px; margin: 0 9px 0 7px; background: #fff; color: #757575; }
.filters > * { border-right: 1px solid #a9a9a9; }
.filters input::placeholder { color: #757575; opacity: 1; }
.f-id { width: 193px; padding-left: 7px; }
.f-name { width: 238px; padding-left: 7px; }
.filters label { display: flex; padding: 0 10px; align-items: center; }
.filters label::after { content: ""; border: 4px solid transparent; border-top: 7px solid #707070; border-bottom: 0; }
.filters select { flex: 1; appearance: none; height: 20px; }
.filters .f-typ { width: 129px; }
.filters .f-role { width: 150px; }
.filters .f-room { width: 158px; }
.filters .f-func { width: 190px; }
.f-val { flex: 1; text-align: center; }
.f-end { width: 7px; }

/* object tree */
.scroll { flex: 1; min-height: 0; display: flex; margin: 0 6px 0 7px; font-family: Roboto, "Open Sans", sans-serif; }
.view { position: relative; flex: 1; min-width: 0; overflow: hidden; border-left: 1px solid #ddd; }
.tree { width: 100%; margin-top: -9px; table-layout: fixed; border-spacing: 0; }
.c1 { width: 306px; }
.c2 { width: 325px; }
.c3 { width: 104px; }
.c4 { width: 152px; }
.c5 { width: 161px; }
.c6 { width: 210px; }
td { height: 21px; padding: 0 0 0 4px; border-right: 1px solid #dcdcdc; border-bottom: 1px solid #dadada; white-space: nowrap; }
td:first-child { padding-left: 0; }
td:nth-child(2) { padding-left: 3px; }
td:last-child { padding-top: 1px; line-height: 19px; border-right: 0; }
.n { display: flex; align-items: center; height: 20px; }
.n svg { width: 16px; height: 16px; margin-right: 4px; }
.n .e { width: 12px; height: 12px; margin-right: 3px; }
.n small { margin: 2px 5px 0 auto; color: #747a90; font-size: 10px; }
.l0 { padding-left: 1px; }
.l1 { padding-left: 8px; }
.l2 { padding-left: 15px; }
.l3 { padding-left: 38px; }
.dim { color: #888; }
.copy { width: 27px; height: 20px; margin-left: auto; background: #fff; }
.n .copy svg { width: 10px; height: 10px; margin: 0; }
tr:has(+ .hover) td, .hover td { border-bottom-color: #7fbdd6; }
.hover td { background: #e5f3fb; }
.hover td:first-child { box-shadow: inset 1px 0 #7fbdd6; }
tr:has(+ .active) td, .active td { border-bottom-color: #4a97b5; }
.active td { background: #cbe8f6; border-right-color: #cbe8f6; }
.active td:first-child { box-shadow: inset 1px 0 #4a97b5; }
.mark { position: absolute; left: 21px; right: 350px; top: 344px; height: 29px; border: 5px solid #d9232e; }
.track { flex: 0 0 5px; background: #ccc; }
.thumb { height: 66px; margin-top: 23px; background: #555; }
```
